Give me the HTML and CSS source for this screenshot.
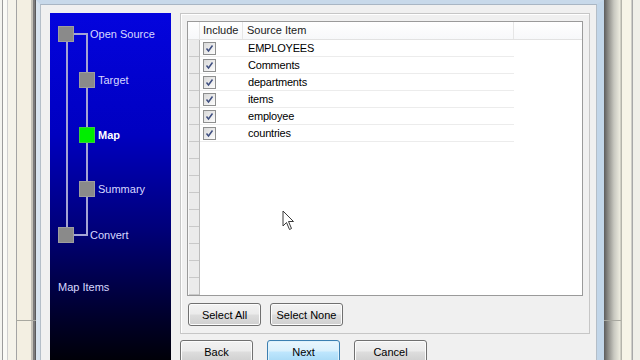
FILE: index.html
```html
<!DOCTYPE html>
<html lang="en">
<head>
  <meta charset="UTF-8" />
  <title>Migration Wizard - Map</title>
  <link rel="stylesheet" href="styles.css">
</head>
<body>

  <div class="desk desk-left"><div class="desk-box"></div></div>

  <div class="window">
    <div class="window-inner">

      <div class="steps">
        <div class="tree">
          <div class="line line-outer"></div>
          <div class="line line-inner"></div>
          <div class="line line-top"></div>
          <div class="line line-bottom"></div>

          <div class="step root step-open"><span class="node"></span><span class="label">Open Source</span></div>
          <div class="step child step-target"><span class="node"></span><span class="label">Target</span></div>
          <div class="step child step-map current"><span class="node"></span><span class="label">Map</span></div>
          <div class="step child step-summary"><span class="node"></span><span class="label">Summary</span></div>
          <div class="step root step-convert"><span class="node"></span><span class="label">Convert</span></div>
        </div>
        <div class="section-title">Map Items</div>
      </div>

      <div class="main">
        <div class="group">
          <div class="listview">
            <div class="lv-header">
              <div class="lv-head"></div>
              <div class="lv-head">Include</div>
              <div class="lv-head">Source Item</div>
              <div class="lv-head filler"></div>
            </div>
            <div class="lv-body">
              <div class="lv-gutter"></div>
              <div class="lv-rows" id="rows"></div>
            </div>
          </div>

          <div class="button-row">
            <button class="btn">Select All</button>
            <button class="btn">Select None</button>
          </div>
        </div>

        <div class="button-row nav">
          <button class="btn">Back</button>
          <button class="btn default">Next</button>
          <button class="btn">Cancel</button>
        </div>
      </div>

    </div>
  </div>

  <div class="desk desk-right"><div class="desk-box"></div></div>

  <svg class="cursor" width="13" height="21" viewBox="0 0 13 21">
    <path d="M1 1 L1 16 L4.5 12.5 L7.5 19.5 L9.5 18.5 L6.5 11.5 L11.5 11.5 Z" fill="#fff" stroke="#3a3a3a" stroke-width="1" stroke-linejoin="round"/>
  </svg>

  <script>
    const items = ['EMPLOYEES', 'Comments', 'departments', 'items', 'employee', 'countries'];
    const rows = document.getElementById('rows');

    items.forEach(name => {
      rows.innerHTML += `
        <div class="lv-row">
          <div class="cell"><span class="check"><svg width="11" height="11" viewBox="0 0 11 11"><path d="M2.5 5.5 L4.5 8 L8.5 2.5" fill="none" stroke="#3f4f80" stroke-width="1.5"/></svg></span></div>
          <div class="cell name">${name}</div>
        </div>`;
    });
  </script>

</body>
</html>
```

FILE: styles.css
```css
* {
  box-sizing: border-box;
}

html, body {
  margin: 0;
  padding: 0;
}

body {
  position: relative;
  display: flex;
  width: 640px;
  height: 360px;
  overflow: hidden;
  background: #f3f0e6;
  font-family: 'Liberation Sans', Arial, sans-serif;
  font-size: 11px;
  color: #000;
}

/* desktop strips either side of the dialog */
.desk {
  width: 36px;
  flex: none;
}

.desk-left {
  background: linear-gradient(to right,
    #f4f4f0 0 2px, #9c9c9c 2px 3px, #fafaf6 3px 7px, #cfcfcf 7px 8px,
    #f5f3ea 8px 16px, #a4a4a4 16px 17px, #f3efe2 17px 31px,
    #c4c2b8 31px 33px, #7c7c7c 33px 35px, #5a5a5a 35px 36px);
}

.desk-left .desk-box {
  margin-left: 16px;
  height: 321px;
  border-bottom: 1px solid #a8a8a0;
}

.desk-right {
  background: linear-gradient(to right,
    #5c5c5c 0, #8a8a86 4px, #c8c8c0 10px, #ecebdf 16px, #b4b4ac 17px 18px,
    #f6f4e8 18px 27px, #a8a8a8 28px 29px, #f0efe8 29px 36px);
}

.desk-right .desk-box {
  width: 17px;
  height: 321px;
  border-bottom: 1px solid #a8a8a0;
}

/* dialog */
.window {
  width: 568px;
  flex: none;
  border-top: 4px solid #c8d9ea;
  border-left: 4px solid #d8e4ee;
  border-right: 7px solid #c2d6e9;
  background: #f0f0f0;
}

.window-inner {
  display: flex;
  gap: 9px;
  height: 100%;
  padding: 8px 6px 0 9px;
  border-top: 1px solid #a9b6c4;
  border-left: 1px solid #b4bec8;
  border-right: 1px solid #b4bec8;
}

/* wizard steps panel */
.steps {
  width: 121px;
  flex: none;
  background: linear-gradient(#0404de 0%, #0000c0 35%, #00007a 62%, #00002a 88%, #000008 100%);
  color: #d8d8ff;
}

.tree {
  position: relative;
  padding: 13px 0 0 8px;
}

.line {
  position: absolute;
  background: #a4a4d4;
}

.line-outer {
  left: 16px;
  top: 29px;
  width: 2px;
  height: 186px;
}

.line-inner {
  left: 36px;
  top: 20px;
  width: 2px;
  height: 203px;
}

.line-top,
.line-bottom {
  left: 24px;
  width: 13px;
  height: 2px;
}

.line-top { top: 20px; }
.line-bottom { top: 221px; }

.step {
  position: relative;
  display: flex;
  align-items: center;
  height: 16px;
}

.step .node {
  width: 16px;
  height: 16px;
  background: #8a8a8a;
  border: 1px solid #9e9e9e;
}

.step.current .node {
  background: #00ee00;
  border-color: #3ccf3c;
}

.step .label {
  white-space: nowrap;
}

.step.current .label {
  font-weight: bold;
  color: #fff;
}

.root .label { margin-left: 16px; }
.child { margin-left: 21px; }
.child .label { margin-left: 3px; }

.step-target { margin-top: 30px; }
.step-map { margin-top: 39px; }
.step-summary { margin-top: 38px; }
.step-convert { margin-top: 30px; }

.section-title {
  margin: 37px 0 0 8px;
  line-height: 14px;
}

/* right side */
.main {
  flex: 1;
  display: flex;
  flex-direction: column;
}

.group {
  padding: 7px 6px 7px 6px;
  border: 1px solid #c6c6c6;
  box-shadow: inset 1px 1px 0 #fff;
}

.listview {
  height: 275px;
  border: 1px solid #9a9a9a;
  background: #fff;
  display: flex;
  flex-direction: column;
}

.lv-header {
  display: grid;
  grid-template-columns: 12px 43px 271px 1fr;
  height: 18px;
  border-bottom: 1px solid #e2e2e2;
  background: linear-gradient(#fff, #f7f8fa);
}

.lv-head {
  padding-left: 3px;
  line-height: 17px;
  color: #1a1a1a;
  border-right: 1px solid #e6e6e6;
}

.lv-head:nth-child(3) {
  padding-left: 4px;
}

.lv-head.filler {
  border-right: none;
}

.lv-body {
  flex: 1;
  display: flex;
}

.lv-gutter {
  width: 12px;
  background: repeating-linear-gradient(#ebebeb 0 16px, #c9c9c9 16px 17px);
  border-left: 1px solid #f8f8f8;
  border-right: 1px solid #bcbcbc;
}

.lv-row {
  display: grid;
  grid-template-columns: 43px 271px;
  width: 314px;
  height: 17px;
  border-bottom: 1px solid #ececec;
}

.cell {
  display: flex;
  align-items: center;
}

.cell.name {
  padding-left: 5px;
  letter-spacing: -0.2px;
}

.check {
  display: flex;
  width: 13px;
  height: 13px;
  margin-left: 3px;
  border: 1px solid #8e8f8f;
  background: linear-gradient(135deg, #d8d8d8, #fdfdfd);
}

.button-row {
  display: flex;
  gap: 9px;
  margin: 7px 0 0 1px;
}

.button-row.nav {
  gap: 14px;
  margin: 6px 0 0 0;
}

.btn {
  width: 73px;
  height: 23px;
  padding: 0;
  font-family: inherit;
  font-size: 11px;
  color: #000;
  border: 1px solid #707070;
  border-radius: 3px;
  background: linear-gradient(#f2f2f2 0%, #ebebeb 48%, #dddddd 52%, #cfcfcf 100%);
  box-shadow: inset 0 0 0 1px #fcfcfc;
}

.btn.default {
  border-color: #3c7fb1;
  background: linear-gradient(#eaf6fd 0%, #d9f0fc 48%, #bee6fd 52%, #a7d9f5 100%);
  box-shadow: inset 0 0 0 1px #dff2fc;
}

.cursor {
  position: absolute;
  left: 282px;
  top: 210px;
}
```
